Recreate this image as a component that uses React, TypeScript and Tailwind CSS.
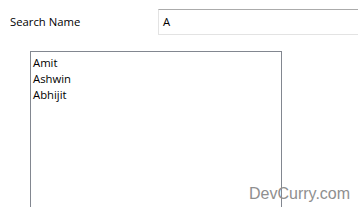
export default function App() {
  const names = ['Amit', 'Ashwin', 'Abhijit'];
  return (
    <div
      className="relative w-[358px] h-[207px] overflow-hidden bg-white text-[11.3px] text-black"
      style={{ fontFamily: "'Open Sans', 'Noto Sans', sans-serif" }}
    >
      {/* search row */}
      <div className="flex items-center pt-[9px]">
        <div className="w-[158px] shrink-0 pl-[10px] leading-none">Search Name</div>
        <div className="h-[26px] w-[220px] shrink-0 border border-[#e3e3e3] border-t-[#ababab] flex items-center pl-[4px] leading-none">
          A
        </div>
      </div>

      {/* results list */}
      <div className="ml-[30px] mt-[16px] w-[252px] h-[170px] border border-[#828790] px-[2px] py-[3px]">
        {names.map((n) => (
          <div key={n} className="leading-[16px]">
            {n}
          </div>
        ))}
      </div>

      {/* watermark */}
      <div
        className="absolute left-[249px] top-[186px] text-[16px] text-[#8f8f8f] leading-none"
        style={{ fontFamily: "'Liberation Sans', Arial, sans-serif" }}
      >
        DevCurry.com
      </div>
    </div>
  );
}
